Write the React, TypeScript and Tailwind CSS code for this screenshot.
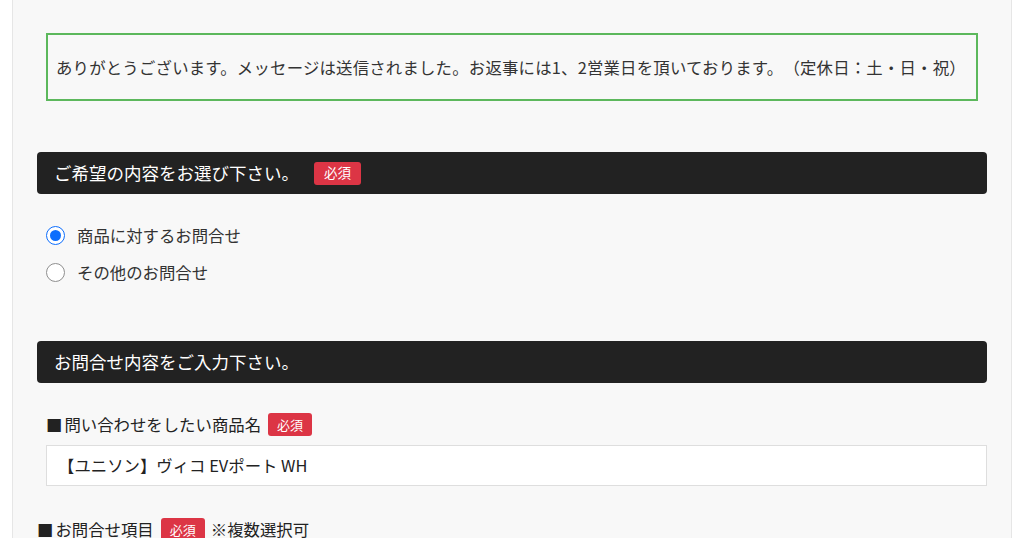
const font = { fontFamily: '"Noto Sans CJK JP", "Noto Sans", sans-serif' };

const Badge = ({ big }: { big?: boolean }) => (
  <span
    className={`inline-flex h-[23px] items-center rounded-[3px] bg-[#dc3545] leading-none text-white ${
      big ? "px-[10px] text-[13.5px]" : "px-[9px] text-[13px]"
    }`}
  >
    必須
  </span>
);

const SectionHeader = ({ title, required }: { title: string; required?: boolean }) => (
  <div className="flex h-[42px] items-center rounded-[4px] bg-[#222222] px-[17px] text-[17.5px] text-white">
    <span>{title}</span>
    {required && (
      <span className="ml-[15px] flex">
        <Badge big />
      </span>
    )}
  </div>
);

const Radio = ({ label, checked }: { label: string; checked?: boolean }) => (
  <label className="flex h-[37px] items-center">
    <span
      className={`ml-[9px] flex h-[19px] w-[19px] items-center justify-center rounded-full bg-white ${
        checked ? "border border-[#0d6efd]" : "border-[1.5px] border-[#8f8f8f]"
      }`}
    >
      {checked && <span className="h-[11px] w-[11px] rounded-full bg-[#0d6efd]" />}
    </span>
    <span className="ml-[12px] text-[16.4px] text-[#333]">{label}</span>
  </label>
);

export default function App() {
  return (
    <div className="min-h-[538px] bg-white pl-[12px] [text-spacing-trim:space-all]" style={font}>
      <div className="h-[538px] w-[1000px] overflow-hidden border-x border-[#e6e6e6] bg-[#f8f8f8] px-[24px]">
        <div className="mx-[9px] mt-[33px] flex h-[68px] items-center border-2 border-[#5cb85c] pl-[8px] text-[16.4px] tracking-[0.2px] text-[#333]">
          ありがとうございます。メッセージは送信されました。お返事には1、2営業日を頂いております。（定休日：土・日・祝）
        </div>

        <div className="mt-[51px]">
          <SectionHeader title="ご希望の内容をお選び下さい。" required />
        </div>

        <div className="mt-[23px]">
          <Radio label="商品に対するお問合せ" checked />
          <Radio label="その他のお問合せ" />
        </div>

        <div className="mt-[50px]">
          <SectionHeader title="お問合せ内容をご入力下さい。" />
        </div>

        <div className="ml-[9px] mt-[29px] flex h-[24px] items-center text-[16.4px] text-[#222]">
          <span>■</span>
          <span className="ml-[2px]">問い合わせをしたい商品名</span>
          <span className="ml-[7px] flex">
            <Badge />
          </span>
        </div>

        <div className="ml-[9px] mt-[9px] flex h-[41px] items-center border border-[#dedede] bg-white px-[11px] text-[16.4px] text-[#222]">
          【ユニソン】ヴィコ EVポート WH
        </div>

        <div className="mt-[31px] flex h-[24px] items-center text-[16.4px] text-[#222]">
          <span>■</span>
          <span className="ml-[2px]">お問合せ項目</span>
          <span className="ml-[7px] flex">
            <Badge />
          </span>
          <span className="ml-[6px]">※複数選択可</span>
        </div>
      </div>
    </div>
  );
}
